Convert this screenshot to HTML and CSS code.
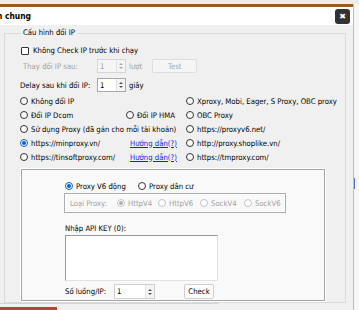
FILE: index.html
```html
<!DOCTYPE html>
<html>
<head>
<meta charset="utf-8">
<title>Cấu hình chung</title>
<link rel="stylesheet" href="styles.css">
</head>
<body>
<div class="page">
    <div class="dialog">
        <div class="head">
            <div class="title"><span>Cấu hình chung</span></div>
            <button class="close" type="button">&#x2716;</button>
        </div>
        <div class="body">
            <fieldset class="group">
                <legend>Cấu hình đổi IP</legend>

                <label class="check-row">
                    <input type="checkbox" class="cb">
                    <span>Không Check IP trước khi chạy</span>
                </label>

                <div class="field-row disabled indent">
                    <span class="field-label">Thay đổi IP sau:</span>
                    <div class="spin off"><span class="spin-val">1</span><span class="spin-btns"><i class="up"></i><i class="down"></i></span></div>
                    <span class="unit">lượt</span>
                    <button class="btn test" type="button" disabled>Test</button>
                </div>

                <div class="field-row delay">
                    <span class="field-label">Delay sau khi đổi IP:</span>
                    <div class="spin"><span class="spin-val">1</span><span class="spin-btns"><i class="up"></i><i class="down"></i></span></div>
                    <span class="unit">giây</span>
                </div>

                <div class="options">
                    <label class="opt wide"><input type="radio" name="mode"><span>Không đổi IP</span></label>
                    <label class="opt"><input type="radio" name="mode"><span>Xproxy, Mobi, Eager, S Proxy, OBC proxy</span></label>

                    <label class="opt"><input type="radio" name="mode"><span>Đổi IP Dcom</span></label>
                    <label class="opt"><input type="radio" name="mode"><span>Đổi IP HMA</span></label>
                    <label class="opt"><input type="radio" name="mode"><span>OBC Proxy</span></label>

                    <label class="opt wide"><input type="radio" name="mode"><span>Sử dụng Proxy (đã gán cho mỗi tài khoản)</span></label>
                    <label class="opt"><input type="radio" name="mode"><span>https://proxyv6.net/</span></label>

                    <label class="opt"><input type="radio" name="mode" checked><span>https://minproxy.vn/</span></label>
                    <a class="guide" href="#">Hướng dẫn(?)</a>
                    <label class="opt"><input type="radio" name="mode"><span>http://proxy.shoplike.vn/</span></label>

                    <label class="opt"><input type="radio" name="mode"><span>https://tinsoftproxy.com/</span></label>
                    <a class="guide" href="#">Hướng dẫn(?)</a>
                    <label class="opt"><input type="radio" name="mode"><span>https://tmproxy.com/</span></label>
                </div>

                <div class="panel">
                    <div class="kind-row">
                        <label class="opt k1"><input type="radio" name="kind" checked><span>Proxy V6 động</span></label>
                        <label class="opt"><input type="radio" name="kind"><span>Proxy dân cư</span></label>
                    </div>
                    <div class="type-box disabled">
                        <span class="type-label">Loại Proxy:</span>
                        <label class="opt t1"><input type="radio" name="type" checked disabled><span>HttpV4</span></label>
                        <label class="opt t2"><input type="radio" name="type" disabled><span>HttpV6</span></label>
                        <label class="opt t3"><input type="radio" name="type" disabled><span>SockV4</span></label>
                        <label class="opt"><input type="radio" name="type" disabled><span>SockV6</span></label>
                    </div>
                    <div class="key-label">Nhập API KEY (0):</div>
                    <textarea class="keys"></textarea>
                    <div class="thread-row">
                        <span class="thread-label">Số luồng/IP:</span>
                        <div class="spin threads"><span class="spin-val">1</span><span class="spin-btns"><i class="up"></i><i class="down"></i></span></div>
                        <button class="btn check" type="button">Check</button>
                    </div>
                </div>
            </fieldset>
            <div class="foot-line"></div>
            <div class="foot-red"></div>
        </div>
    </div>
    <div class="side"><span class="mark"></span></div>
</div>
</body>
</html>
```

FILE: styles.css
```css
body {
    margin: 0;
    background: #ececec;
    font-family: "DejaVu Sans", sans-serif;
    font-stretch: condensed;
    font-size: 7.7px;
    color: #000;
    overflow: hidden;
}
.page {
    display: flex;
    height: 310px;
    padding-top: 4px;
    box-sizing: border-box;
}
.dialog {
    width: 353px;
    border-top: 3px solid #9b5a1f;
    background: #f0f0f0;
    display: flex;
    flex-direction: column;
}
.side {
    flex: 1;
    border-left: 1px solid #bdbdbd;
    background: #f6f6f6;
    position: relative;
}
.side .mark {
    position: absolute;
    left: 0;
    top: 174px;
    width: 1px;
    height: 11px;
    background: #4a78c8;
}
.head {
    height: 18px;
    background: #fff;
    display: flex;
    align-items: flex-start;
    justify-content: space-between;
}
.title {
    width: 31px;
    height: 18px;
    display: flex;
    justify-content: flex-end;
    align-items: center;
    white-space: nowrap;
    font-weight: bold;
    font-size: 8.4px;
}
.close {
    margin: 2px 3px 0 0;
    width: 15px;
    height: 15px;
    padding: 0;
    border: none;
    border-radius: 3px;
    background: #333;
    color: #fff;
    font-size: 8px;
    line-height: 15px;
    font-family: "DejaVu Sans", sans-serif;
}
.body {
    flex: 1;
    padding-top: 3px;
}
.group {
    margin: 0 7px 0 4px;
    padding: 0 0 1px 15px;
    border: 1px solid #dadada;
    min-width: 0;
}
.group legend {
    padding: 0 2px;
    margin-left: 1px;
    line-height: 10px;
}
input[type=radio], input[type=checkbox] {
    appearance: none;
    -webkit-appearance: none;
    margin: 0;
    flex: none;
    background: #fff;
    border: 1px solid #333;
    box-sizing: border-box;
}
.cb {
    width: 8px;
    height: 8px;
    border-radius: 1px;
}
input[type=radio] {
    width: 8px;
    height: 8px;
    border-radius: 50%;
    position: relative;
}
input[type=radio]:checked {
    border-color: #0a5fd0;
}
input[type=radio]:checked::after {
    content: "";
    position: absolute;
    left: 1px;
    top: 1px;
    width: 4px;
    height: 4px;
    border-radius: 50%;
    background: #0a5fd0;
}
input[type=radio]:disabled {
    border-color: #c4c4c4;
}
input[type=radio]:disabled:checked::after {
    background: #b0b0b0;
}
.check-row {
    display: flex;
    align-items: center;
    gap: 4px;
    height: 13px;
    margin: 6px 0 0 1px;
}
.field-row {
    display: flex;
    align-items: center;
    height: 14px;
}
.field-row.indent {
    margin-top: 2px;
    padding-left: 3px;
}
.field-row.delay {
    margin-top: 5px;
}
.field-label {
    width: 77px;
}
.indent .field-label {
    width: 74px;
}
.disabled {
    color: #a2a2a2;
}
.spin {
    width: 29px;
    height: 14px;
    box-sizing: border-box;
    border: 1px solid #a9a9a9;
    background: #fff;
    display: flex;
    align-items: center;
    color: #000;
}
.spin.off {
    background: #f5f5f5;
    border-color: #d6d6d6;
    color: #a2a2a2;
}
.spin-val {
    flex: 1;
    padding-left: 2px;
}
.spin-btns {
    width: 8px;
    height: 100%;
    display: flex;
    flex-direction: column;
    justify-content: center;
    align-items: center;
    gap: 2px;
    border-left: 1px solid #e2e2e2;
    background: #f4f4f4;
}
.spin-btns i {
    width: 0;
    height: 0;
    border-left: 2px solid transparent;
    border-right: 2px solid transparent;
}
.spin-btns .up {
    border-bottom: 2px solid #555;
}
.spin-btns .down {
    border-top: 2px solid #555;
}
.off .spin-btns .up {
    border-bottom-color: #aaa;
}
.off .spin-btns .down {
    border-top-color: #aaa;
}
.unit {
    margin-left: 3px;
}
.btn {
    font-family: inherit;
    font-size: inherit;
    font-stretch: inherit;
    padding: 0;
    box-sizing: border-box;
    background: #fdfdfd;
    border: 1px solid #cfcfcf;
    border-radius: 2px;
    color: #000;
}
.test {
    margin-left: 10px;
    width: 45px;
    height: 14px;
    background: #f5f5f5;
    border-color: #dedede;
    color: #a8a8a8;
}
.options {
    display: grid;
    grid-template-columns: 106px 60px 1fr;
    grid-auto-rows: 14px;
    margin-top: 2px;
}
.opt {
    display: flex;
    align-items: center;
    gap: 3px;
    white-space: nowrap;
}
.opt.wide {
    grid-column: span 2;
}
.guide {
    color: #1a1aee;
    text-decoration: underline;
    align-self: center;
    padding-left: 4px;
}
.panel {
    margin: 5px 0 0 1px;
    width: 304px;
    box-sizing: border-box;
    border: 1px solid #a4a4a4;
    box-shadow: 0 0 0 1px #fff;
    background: #f9f9f9;
    padding: 10px 0 1px 43px;
    display: flex;
    flex-direction: column;
    align-items: flex-start;
}
.kind-row {
    display: flex;
    height: 12px;
}
.k1 {
    width: 73px;
}
.type-box {
    margin: 1px 0 0 -1px;
    width: 222px;
    height: 20px;
    box-sizing: border-box;
    border: 1px solid #adadad;
    box-shadow: inset 0 0 0 1px #fff;
    display: flex;
    align-items: center;
    padding-left: 5px;
}
.type-label {
    width: 47px;
}
.t1 {
    width: 41px;
}
.t2 {
    width: 42px;
}
.t3 {
    width: 44px;
}
.key-label {
    margin-top: 10px;
    height: 12px;
    line-height: 12px;
}
.keys {
    width: 153px;
    height: 46px;
    box-sizing: border-box;
    margin: 0;
    resize: none;
    background: #fff;
    border: 1px solid;
    border-color: #9a9a9a #e2e2e2 #e2e2e2 #9a9a9a;
}
.thread-row {
    display: flex;
    align-items: center;
    height: 15px;
    margin-top: 3px;
}
.thread-label {
    width: 49px;
}
.spin.threads {
    width: 41px;
    height: 15px;
    border-color: #d0d0d0;
}
.check {
    margin-left: 29px;
    width: 30px;
    height: 15px;
}
.foot-line {
    width: 218px;
    height: 1px;
    background: #d4d4d4;
}
.foot-red {
    margin-top: 3px;
    width: 57px;
    height: 3px;
    background: #b4453a;
}
```
